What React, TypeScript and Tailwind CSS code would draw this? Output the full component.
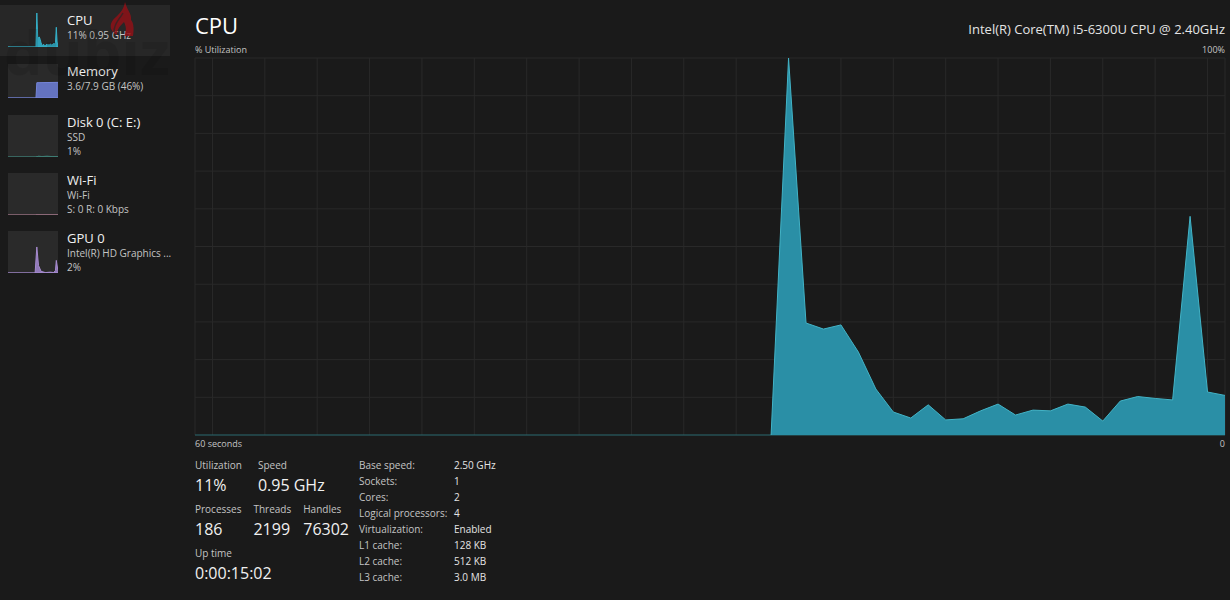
import React from 'react';

type Point = [number, number];

interface Device {
    id: string;
    name: string;
    lines: string[];
    stroke: string;
    fill: string;
    points: Point[];
    hideFrame?: boolean;
}

interface Stat {
    label: string;
    value: string;
}

// utilization in percent, last 27 samples of the 60 second window
const CPU_SAMPLES = [
    0, 100, 29.7, 28.1, 29.2, 22, 12.2, 6.1, 4.5, 8, 4, 4.3, 6.4, 8.2,
    5.3, 6.6, 6.4, 8.2, 7.4, 3.7, 9, 10.2, 9.7, 9.3, 58, 11.4, 10.5,
];

const LAST = 59;
const FIRST = LAST - CPU_SAMPLES.length + 1;

const cpuPoints: Point[] = CPU_SAMPLES.map((value, i) => [FIRST + i, value]);

const DEVICES: Device[] = [
    {
        id: 'cpu',
        name: 'CPU',
        lines: ['11% 0.95 GHz'],
        stroke: '#35b0c8',
        fill: '#2fa3bc',
        points: cpuPoints,
        hideFrame: true,
    },
    {
        id: 'memory',
        name: 'Memory',
        lines: ['3.6/7.9 GB (46%)'],
        stroke: '#7585d8',
        fill: '#6473c0',
        points: [[33, 0], [34, 45], [59, 46]],
    },
    {
        id: 'disk',
        name: 'Disk 0 (C: E:)',
        lines: ['SSD', '1%'],
        stroke: '#3f7f76',
        fill: '#2c5c55',
        points: [[33, 0], [36, 2], [40, 1], [46, 2], [52, 1], [59, 1]],
    },
    {
        id: 'wifi',
        name: 'Wi-Fi',
        lines: ['Wi-Fi', 'S: 0 R: 0 Kbps'],
        stroke: '#9c7484',
        fill: '#6b505b',
        points: [[33, 0], [59, 0]],
    },
    {
        id: 'gpu',
        name: 'GPU 0',
        lines: ['Intel(R) HD Graphics ...', '2%'],
        stroke: '#a78bd0',
        fill: '#9079b8',
        points: [[32, 0], [34, 62], [36, 18], [39, 4], [44, 1], [50, 2], [54, 1], [56, 6], [57, 30], [59, 4]],
    },
];

const STAT_ROWS: Stat[][] = [
    [
        { label: 'Utilization', value: '11%' },
        { label: 'Speed', value: '0.95 GHz' },
    ],
    [
        { label: 'Processes', value: '186' },
        { label: 'Threads', value: '2199' },
        { label: 'Handles', value: '76302' },
    ],
    [{ label: 'Up time', value: '0:00:15:02' }],
];

const DETAILS: Stat[] = [
    { label: 'Base speed:', value: '2.50 GHz' },
    { label: 'Sockets:', value: '1' },
    { label: 'Cores:', value: '2' },
    { label: 'Logical processors:', value: '4' },
    { label: 'Virtualization:', value: 'Enabled' },
    { label: 'L1 cache:', value: '128 KB' },
    { label: 'L2 cache:', value: '512 KB' },
    { label: 'L3 cache:', value: '3.0 MB' },
];

const toLine = (points: Point[]) => points.map(([x, y]) => `${x},${100 - y}`).join(' ');

const Area: React.FC<{ points: Point[]; stroke: string; fill: string }> = ({ points, stroke, fill }) => (
    <>
        <polygon points={`${toLine(points)} ${LAST},100 ${points[0][0]},100`} fill={fill} />
        <polyline
            points={toLine(points)}
            fill="none"
            stroke={stroke}
            strokeWidth="1"
            vectorEffect="non-scaling-stroke"
        />
    </>
);

const DeviceItem: React.FC<{ device: Device; selected: boolean; onSelect: (id: string) => void }> = ({
    device,
    selected,
    onSelect,
}) => {
    const tall = device.lines.length > 1;

    return (
        <button
            type="button"
            aria-pressed={selected}
            onClick={() => onSelect(device.id)}
            className={`flex w-full items-start gap-[9px] pt-2 pl-2 text-left ${tall ? 'pb-2' : 'pb-[9px]'} ${selected ? 'bg-[#272727]' : ''}`}
        >
            <svg
                viewBox="0 0 59 100"
                preserveAspectRatio="none"
                className={`w-[50px] shrink-0 ${tall ? 'h-[42px]' : 'h-[34px]'} ${device.hideFrame ? '' : 'bg-[#2a2a2a]'}`}
            >
                <Area points={device.points} stroke={device.stroke} fill={device.fill} />
                <path
                    d="M0 100H59"
                    stroke={device.stroke}
                    strokeWidth="2"
                    strokeOpacity="0.7"
                    vectorEffect="non-scaling-stroke"
                />
            </svg>
            <span className="-my-px min-w-0 flex-1">
                <span className="block text-[13px] leading-4 text-[#f0f0f0]">{device.name}</span>
                {device.lines.map((line) => (
                    <span key={line} className="block whitespace-nowrap text-[10px] leading-[14px] text-[#c4c4c4]">
                        {line}
                    </span>
                ))}
            </span>
        </button>
    );
};

const Watermark: React.FC = () => (
    <div aria-hidden="true" className="pointer-events-none absolute top-0 left-0 h-24 w-[170px] overflow-hidden">
        <svg viewBox="0 0 170 96" className="h-full w-full">
            <text x="4" y="75" fontSize="61" fontWeight="700" fill="#000000" fillOpacity="0.1">
                dubız
            </text>
            <path
                d="M125 2C127 10 132 14 131 20C134 23 134 30 133 36H124C127 31 126 26 124 22C120 26 117 29 117 35C110 31 109 25 113 20C118 15 124 10 125 2Z"
                fill="#8f1218"
                fillOpacity="0.85"
            />
            <path d="M123 13C119 20 114 23 114 32" fill="none" stroke="#272727" strokeOpacity="0.7" strokeWidth="1.5" />
        </svg>
    </div>
);

const UtilizationChart: React.FC = () => {
    const columns = [0, LAST];
    for (let x = 1; x < LAST; x += 3) columns.push(x);
    const rows = Array.from({ length: 10 }, (_, i) => i * 10);

    return (
        <svg
            role="img"
            aria-label="CPU utilization over 60 seconds"
            viewBox="0 0 59 100"
            preserveAspectRatio="none"
            className="min-h-48 w-full grow basis-px overflow-visible"
        >
            <g stroke="#292929" strokeWidth="1" shapeRendering="crispEdges">
                {columns.map((x) => (
                    <path key={`c${x}`} d={`M${x} 0V100`} vectorEffect="non-scaling-stroke" />
                ))}
                {rows.map((y) => (
                    <path key={`r${y}`} d={`M0 ${y}H59`} vectorEffect="non-scaling-stroke" />
                ))}
            </g>
            <path d="M0 100H59" stroke="#2b6a70" strokeWidth="1" vectorEffect="non-scaling-stroke" />
            <Area points={cpuPoints} stroke="#42b3c6" fill="#2a8fa6" />
        </svg>
    );
};

const App: React.FC = () => {
    const [selected, setSelected] = React.useState('cpu');

    return (
        <div className="flex min-h-screen bg-[#1a1a1a] font-['Open_Sans','Noto_Sans',sans-serif] text-[#c4c4c4]">
            <nav aria-label="Devices" className="relative w-[170px] shrink-0 pt-[5px]">
                {DEVICES.map((device) => (
                    <DeviceItem
                        key={device.id}
                        device={device}
                        selected={device.id === selected}
                        onSelect={setSelected}
                    />
                ))}
                <Watermark />
            </nav>

            <main className="flex min-w-0 flex-1 flex-col pr-[5px] pb-[15px] pl-[25px]">
                <header className="flex h-[43px] items-end justify-between pb-1">
                    <h1 className="text-[22px] leading-7 text-white">CPU</h1>
                    <p className="text-[13px] leading-5 text-[#e4e4e4]">Intel(R) Core(TM) i5-6300U CPU @ 2.40GHz</p>
                </header>
                <div className="mb-px flex justify-between text-[9px] leading-[14px]">
                    <span>% Utilization</span>
                    <span>100%</span>
                </div>
                <UtilizationChart />
                <div className="mt-[2px] flex justify-between text-[9px] leading-[14px]">
                    <span>60 seconds</span>
                    <span>0</span>
                </div>

                <div className="mt-[6px] flex items-start gap-[10px]">
                    <div className="flex flex-col gap-1">
                        {STAT_ROWS.map((row) => (
                            <dl key={row[0].label} className={`flex ${row.length > 2 ? 'gap-3' : 'gap-4'}`}>
                                {row.map((stat) => (
                                    <div key={stat.label}>
                                        <dt className="text-[10px] leading-4">{stat.label}</dt>
                                        <dd className="text-base leading-6 text-[#f0f0f0]">{stat.value}</dd>
                                    </div>
                                ))}
                            </dl>
                        ))}
                    </div>
                    <table className="text-left text-[10px] leading-4">
                        <tbody>
                            {DETAILS.map((detail) => (
                                <tr key={detail.label}>
                                    <th scope="row" className="w-[95px] p-0 font-normal">{detail.label}</th>
                                    <td className="p-0 text-[#e4e4e4]">{detail.value}</td>
                                </tr>
                            ))}
                        </tbody>
                    </table>
                </div>
            </main>
        </div>
    );
};

export default App;
